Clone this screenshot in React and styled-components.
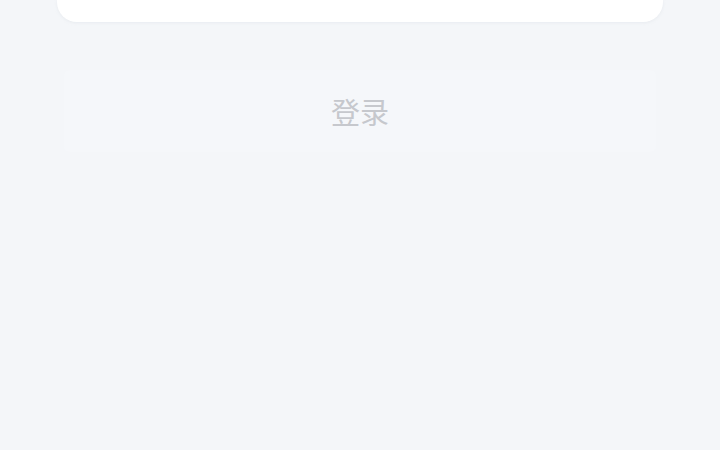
import styled, { createGlobalStyle } from "styled-components";

const Global = createGlobalStyle`
  html, body {
    margin: 0;
    padding: 0;
    background-color: #f4f6f9;
    font-family: "Noto Sans CJK SC", "Noto Sans", sans-serif;
  }
`;

const Page = styled.div`
  min-height: 450px;
  background-color: #f4f6f9;
  padding: 0 57px;
  display: flex;
  flex-direction: column;
  gap: 48px;
`;

const Card = styled.div`
  height: 22px;
  background-color: #ffffff;
  border-radius: 0 0 20px 20px;
  box-shadow: 0 1px 3px rgba(200, 206, 216, 0.25);
`;

const LoginButton = styled.button`
  height: 82px;
  margin: 0 7px;
  border: none;
  border-radius: 6px;
  background-color: #f5f7fa;
  color: #c6c8cd;
  font-family: "Noto Sans CJK SC", "Noto Sans", sans-serif;
  font-size: 29px;
  letter-spacing: 0;
  cursor: pointer;
  display: flex;
  align-items: center;
  justify-content: center;
`;

export default function App() {
  return (
    <>
      <Global />
      <Page>
        <Card />
        <LoginButton>登录</LoginButton>
      </Page>
    </>
  );
}
